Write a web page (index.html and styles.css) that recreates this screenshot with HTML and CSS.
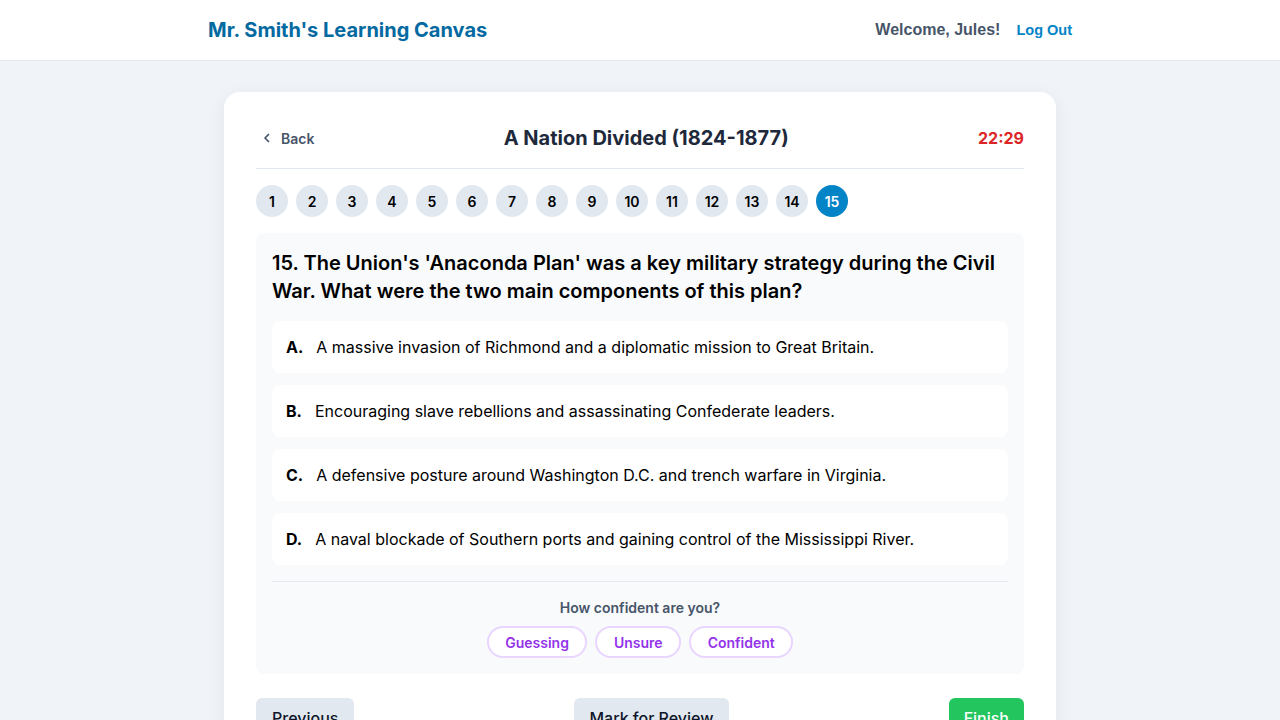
FILE: index.html
```html
<!DOCTYPE html>
<html lang="en">
<head>
<meta charset="utf-8">
<title>Quiz</title>
<link rel="stylesheet" href="styles.css">
</head>
<body>
<header class="topbar">
  <div class="topbar-inner">
    <div class="brand">Mr. Smith's Learning Canvas</div>
    <div class="user">
      <span class="welcome">Welcome, Jules!</span>
      <a class="logout" href="#">Log Out</a>
    </div>
  </div>
</header>
<main class="page">
  <section class="card">
    <div class="card-head">
      <a class="back" href="#">
        <svg width="12" height="12" viewBox="0 0 24 24" fill="none" stroke="currentColor" stroke-width="3.5" stroke-linecap="round" stroke-linejoin="round"><path d="M15 5l-7 7 7 7"/></svg>
        <span>Back</span>
      </a>
      <h1 class="quiz-title">A Nation Divided (1824-1877)</h1>
      <div class="timer">22:29</div>
    </div>
    <nav class="qnav">
      <span class="qnum">1</span><span class="qnum">2</span><span class="qnum">3</span><span class="qnum">4</span><span class="qnum">5</span><span class="qnum">6</span><span class="qnum">7</span><span class="qnum">8</span><span class="qnum">9</span><span class="qnum">10</span><span class="qnum">11</span><span class="qnum">12</span><span class="qnum">13</span><span class="qnum">14</span><span class="qnum active">15</span>
    </nav>
    <div class="question-box">
      <h2 class="question">15. The Union's 'Anaconda Plan' was a key military strategy during the Civil War. What were the two main components of this plan?</h2>
      <div class="options">
        <div class="option"><span class="letter">A.</span><span>A massive invasion of Richmond and a diplomatic mission to Great Britain.</span></div>
        <div class="option"><span class="letter">B.</span><span>Encouraging slave rebellions and assassinating Confederate leaders.</span></div>
        <div class="option"><span class="letter">C.</span><span>A defensive posture around Washington D.C. and trench warfare in Virginia.</span></div>
        <div class="option"><span class="letter">D.</span><span>A naval blockade of Southern ports and gaining control of the Mississippi River.</span></div>
      </div>
      <div class="confidence">
        <div class="conf-label">How confident are you?</div>
        <div class="pills">
          <button class="pill">Guessing</button>
          <button class="pill">Unsure</button>
          <button class="pill">Confident</button>
        </div>
      </div>
    </div>
    <div class="actions">
      <button class="btn btn-grey">Previous</button>
      <button class="btn btn-grey">Mark for Review</button>
      <button class="btn btn-green">Finish</button>
    </div>
  </section>
</main>
</body>
</html>
```
FILE: styles.css
```css
* { box-sizing: border-box; }
html, body { margin: 0; padding: 0; }
body {
  background: #f0f4f8;
  font-family: Inter, "Noto Sans", sans-serif;
  color: #0f172a;
}
.topbar {
  background: #ffffff;
  height: 61px;
  border-bottom: 1px solid #e2e8f0;
}
.topbar-inner {
  width: 864px;
  margin: 0 auto;
  height: 60px;
  display: flex;
  align-items: center;
  justify-content: space-between;
}
.brand {
  font-size: 20px;
  font-weight: 700;
  color: #0369a1;
}
.user {
  display: flex;
  align-items: center;
  gap: 16px;
}
.welcome {
  font-family: "Liberation Sans", Arial, sans-serif;
  font-size: 16px;
  font-weight: 700;
  color: #475569;
}
.logout {
  font-family: "Liberation Sans", Arial, sans-serif;
  font-size: 14.5px;
  font-weight: 700;
  color: #0284c7;
  text-decoration: none;
}
.page {
  padding-top: 31px;
  display: flex;
  justify-content: center;
}
.card {
  width: 832px;
  background: #ffffff;
  border-radius: 16px;
  padding: 32px;
  box-shadow: 0 4px 20px rgba(15, 23, 42, 0.06);
}
.card-head {
  display: flex;
  align-items: center;
  justify-content: space-between;
  height: 28px;
  box-sizing: content-box;
  padding-bottom: 16px;
  border-bottom: 1px solid #e2e8f0;
}
.back {
  display: flex;
  align-items: center;
  gap: 8px;
  padding-left: 5px;
  color: #475569;
  font-size: 14px;
  font-weight: 600;
  text-decoration: none;
}
.quiz-title {
  margin: 0;
  font-size: 20px;
  font-weight: 700;
  color: #1e293b;
}
.timer {
  font-size: 16px;
  font-weight: 700;
  color: #dc2626;
}
.qnav {
  display: flex;
  gap: 8px;
  margin-top: 16px;
}
.qnum {
  width: 32px;
  height: 32px;
  border-radius: 50%;
  background: #e2e8f0;
  color: #000000;
  font-size: 14px;
  font-weight: 600;
  display: flex;
  align-items: center;
  justify-content: center;
}
.qnum.active {
  background: #0284c7;
  color: #ffffff;
}
.question-box {
  margin-top: 16px;
  background: #f8fafc;
  border-radius: 8px;
  padding: 16px;
}
.question {
  margin: 0 0 16px;
  font-size: 20px;
  line-height: 28px;
  font-weight: 600;
  color: #000000;
}
.options {
  display: flex;
  flex-direction: column;
  gap: 12px;
}
.option {
  background: #ffffff;
  border-radius: 8px;
  height: 52px;
  padding: 0 14px;
  display: flex;
  align-items: center;
  font-size: 16px;
  color: #000000;
}
.letter {
  font-weight: 700;
  margin-right: 13px;
}
.confidence {
  margin-top: 16px;
  border-top: 1px solid #e2e8f0;
  padding-top: 16px;
  display: flex;
  flex-direction: column;
  align-items: center;
  gap: 8px;
}
.conf-label {
  font-size: 14px;
  line-height: 20px;
  font-weight: 600;
  color: #475569;
}
.pills {
  display: flex;
  gap: 8px;
}
.pill {
  height: 32px;
  padding: 0 16.5px;
  border-radius: 999px;
  border: 2px solid #e9d5ff;
  background: #ffffff;
  color: #9333ea;
  font-family: Inter, sans-serif;
  font-size: 14px;
  font-weight: 600;
}
.actions {
  margin-top: 24px;
  display: flex;
  justify-content: space-between;
}
.btn {
  height: 40px;
  padding: 0 16px;
  border: none;
  border-radius: 6px;
  font-family: Inter, sans-serif;
  font-size: 16px;
  font-weight: 500;
}
.btn-grey {
  background: #e2e8f0;
  color: #0f172a;
}
.btn-green {
  background: #22c55e;
  color: #ffffff;
  padding: 0 15px;
}
```
